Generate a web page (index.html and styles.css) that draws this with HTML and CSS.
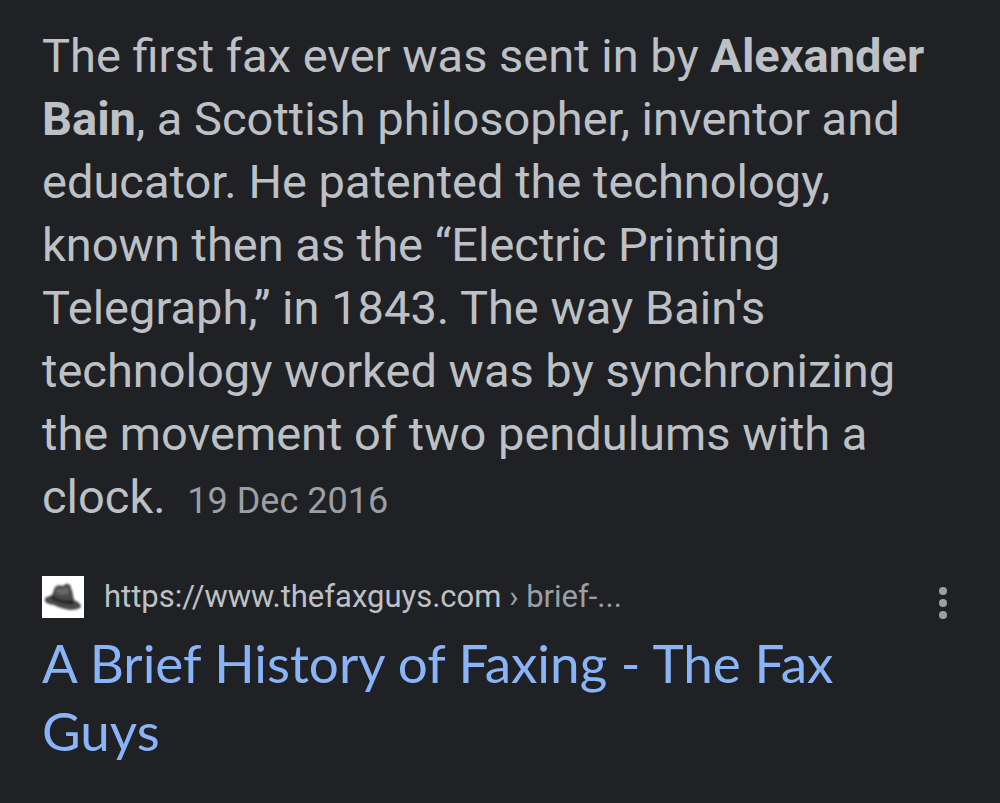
FILE: index.html
```html
<!DOCTYPE html>
<html lang="en">
<head>
    <meta charset="UTF-8">
    <meta name="viewport" content="width=device-width, initial-scale=1.0">
    <title>first fax - Search</title>
    <link rel="stylesheet" href="styles.css">
</head>
<body>

    <main class="result">
        <p class="snippet">The first fax ever was sent in by <b>Alexander Bain</b>, a Scottish philosopher, inventor and educator. He patented the technology, known then as the “Electric Printing Telegraph,” in 1843. The way Bain's technology worked was by synchronizing the movement of two pendulums with a clock. <span class="date">19 Dec 2016</span></p>

        <div class="source">
            <svg class="favicon" viewBox="0 0 42 42" aria-hidden="true">
                <defs>
                    <filter id="soft"><feGaussianBlur stdDeviation="0.8"/></filter>
                </defs>
                <rect width="42" height="42" fill="#fff"/>
                <g filter="url(#soft)">
                    <path d="M3 22Q7 20 10 19L13 11Q16 8 21 10Q25 6 28 9Q31 16 32 24Q39 27 39 31Q36 34 28 34Q17 32 12 29Q4 28 3 25Z" fill="#484848"/>
                    <path d="M10 19Q17 26 31 24L32 28Q19 29 9 23Z" fill="#262626"/>
                    <path d="M15 12Q20 14 26 11L27 18Q19 20 14 17Z" fill="#686868"/>
                </g>
            </svg>
            <cite class="url">https://www.thefaxguys.com<span class="path"> › brief-...</span></cite>
            <button class="menu" type="button" aria-label="About this result">
                <svg viewBox="0 0 10 32" aria-hidden="true">
                    <circle cx="5" cy="4" r="4"/>
                    <circle cx="5" cy="16" r="4"/>
                    <circle cx="5" cy="28" r="4"/>
                </svg>
            </button>
        </div>

        <h3 class="title"><a href="#">A Brief History of Faxing - The Fax Guys</a></h3>
    </main>

</body>
</html>
```

FILE: styles.css
```css
body {
    margin: 0;
    background-color: #202125;
    color: #bdc1c6;
    font-family: Roboto, Arial, sans-serif;
}

.result {
    padding: 24px 42px;
}

.snippet {
    margin: 0;
    font-size: 47px;
    line-height: 63px;
}

.date {
    margin-left: 10px;
    font-size: 36px;
    line-height: 1;
    color: #9aa0a6;
}

.source {
    display: flex;
    align-items: flex-start;
    margin-top: 48px;
}

.favicon {
    width: 42px;
    height: 42px;
    margin-right: 20px;
}

.url {
    flex: 1;
    font-size: 31px;
    line-height: 42px;
    font-style: normal;
}

.path {
    color: #9aa0a6;
}

.menu {
    display: flex;
    padding: 11px 10px 10px;
    border: none;
    background: none;
    cursor: pointer;
}

.menu svg {
    width: 10px;
    height: 32px;
    fill: #9aa0a6;
}

.title {
    margin: 0;
    padding-right: 24px;
    font-family: Lato, Roboto, sans-serif;
    font-size: 53px;
    font-weight: 400;
    line-height: 68px;
}

.title a {
    color: #8ab4f8;
    text-decoration: none;
}
```
